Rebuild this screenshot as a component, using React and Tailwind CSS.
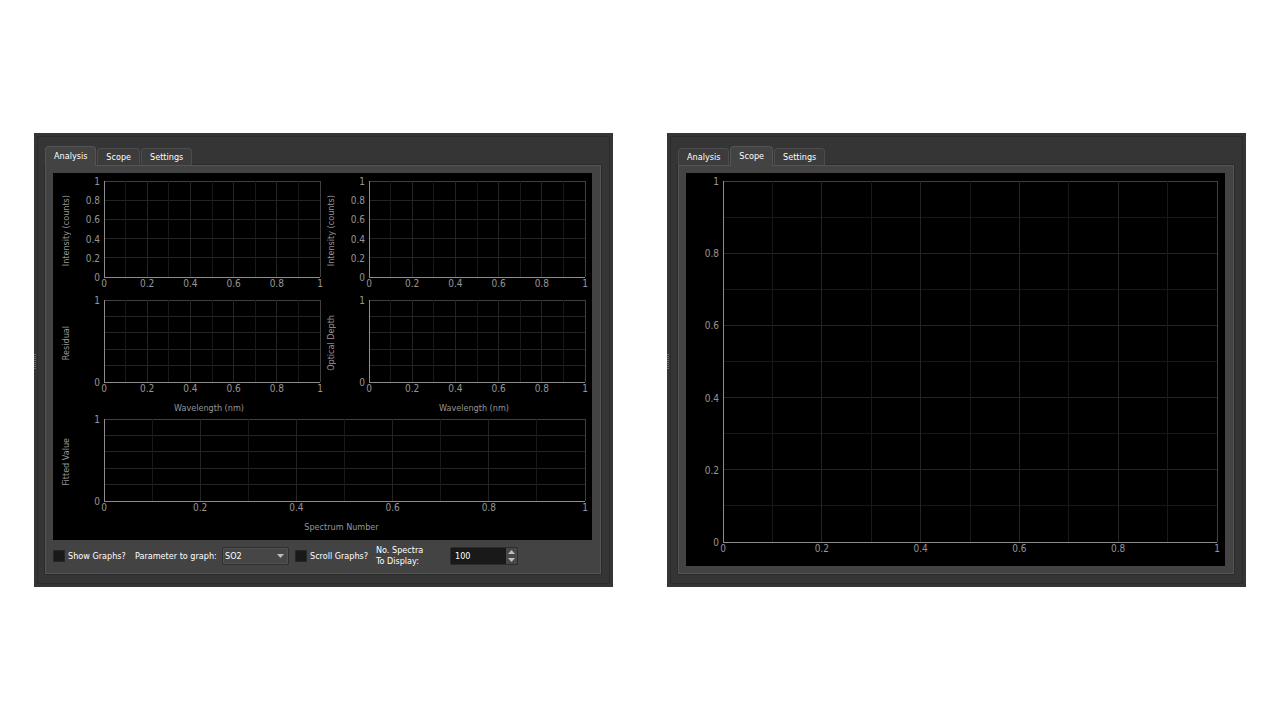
import { useId, useState } from "react";

const TABS = ["Analysis", "Scope", "Settings"];
const LABELLED = [0, 2, 4, 6, 8, 10];
const TENTHS = [0, 1, 2, 3, 4, 5, 6, 7, 8, 9, 10];

function gridColor(tenth, edge) {
  if (tenth === edge) return "#404040";
  return tenth % 2 === 0 ? "#242424" : "#181818";
}

function Plot({ rows = LABELLED, yTicks = LABELLED, className }) {
  return (
    <svg className={`block w-full overflow-visible ${className}`} role="img" aria-label="Empty plot">
      <g shapeRendering="crispEdges" strokeWidth="1">
        {rows.map((t) => (
          <line key={`h${t}`} x1="0" x2="100%" y1={`${100 - t * 10}%`} y2={`${100 - t * 10}%`} stroke={gridColor(t, 10)} />
        ))}
        {TENTHS.map((t) => (
          <line key={`v${t}`} x1={`${t * 10}%`} x2={`${t * 10}%`} y1="0" y2="100%" stroke={gridColor(t, 10)} />
        ))}
        <line x1="0" x2="0" y1="0" y2="100%" stroke="#8c8c8c" />
        <line x1="0" x2="100%" y1="100%" y2="100%" stroke="#8c8c8c" />
      </g>
      <g fill="#969696" fontSize="10">
        {yTicks.map((t) => (
          <text key={`y${t}`} x="-4" y={`${100 - t * 10}%`} dy="4" textAnchor="end">
            {t / 10}
          </text>
        ))}
        {LABELLED.map((t) => (
          <text key={`x${t}`} x={`${t * 10}%`} y="100%" dy="10" textAnchor="middle">
            {t / 10}
          </text>
        ))}
      </g>
    </svg>
  );
}

function Chart({ yLabel, xLabel, plotClass, rows, yTicks, className = "" }) {
  return (
    <div className={`flex flex-col text-[#969696] ${className}`}>
      <div className="flex">
        <div className="flex w-12 shrink-0 items-center pt-1 pl-1">
          <span className="rotate-180 leading-3 whitespace-nowrap [writing-mode:vertical-rl]">{yLabel}</span>
        </div>
        <div className="min-w-0 flex-1">
          <Plot className={plotClass} rows={rows} yTicks={yTicks} />
        </div>
      </div>
      {xLabel && <div className="mt-5 pr-0.5 pl-11 text-center leading-3">{xLabel}</div>}
    </div>
  );
}

function Window({ active, children }) {
  const [current, setCurrent] = useState(active);
  return (
    <section className="relative flex min-w-0 flex-1 flex-col bg-[#353535] pt-[13px] pr-3 pb-[13px] pl-[11px]">
      <div className="pointer-events-none absolute inset-[3px] border border-[#2c2c2c]" />
      <div className="absolute top-[221px] left-0 h-4 w-0.5 bg-[repeating-linear-gradient(#6a6a6a_0_1px,#303030_1px_2px)]" />
      <div role="tablist" className="relative z-10 flex items-end gap-px">
        {TABS.map((tab) => (
          <button
            key={tab}
            role="tab"
            aria-selected={tab === current}
            onClick={() => setCurrent(tab)}
            className={
              tab === current
                ? "-mb-px h-5 rounded-t-sm border border-b-0 border-[#545454] bg-[#434343] px-2 pb-0.5 text-white"
                : "h-[17px] rounded-t-sm border border-b-0 border-[#4c4c4c] bg-[#3c3c3c] px-2 text-white"
            }
          >
            {tab}
          </button>
        ))}
      </div>
      <div role="tabpanel" className="flex flex-1 flex-col border border-[#555555] bg-[#434343] pt-[7px] pr-2 pl-[7px] ring-1 ring-[#2b2b2b]">
        {children}
      </div>
    </section>
  );
}

function CheckBox({ label }) {
  return (
    <label className="flex items-center gap-[3px] whitespace-nowrap">
      <input
        type="checkbox"
        className="size-3 appearance-none border border-[#262626] bg-[#191919] checked:bg-[#2a82da]"
      />
      {label}
    </label>
  );
}

function SpinBox({ id }) {
  const [value, setValue] = useState(100);
  return (
    <div className="flex h-[18px] w-[68px] overflow-hidden rounded-xs border border-[#2b2b2b] bg-[#191919]">
      <input
        id={id}
        value={value}
        onChange={(e) => setValue(Number(e.target.value) || 0)}
        className="w-0 min-w-0 flex-1 bg-transparent pl-1 text-white outline-none"
      />
      <div className="flex w-[11px] flex-col bg-[#484848]">
        <button aria-label="Increase" onClick={() => setValue(value + 1)} className="flex flex-1 items-center justify-center">
          <svg width="7" height="4" viewBox="0 0 7 4" fill="#bdbdbd">
            <path d="M3.5 0 7 4H0z" />
          </svg>
        </button>
        <button aria-label="Decrease" onClick={() => setValue(value - 1)} className="flex flex-1 items-center justify-center">
          <svg width="7" height="4" viewBox="0 0 7 4" fill="#bdbdbd">
            <path d="M0 0h7L3.5 4z" />
          </svg>
        </button>
      </div>
    </div>
  );
}

function Controls() {
  const id = useId();
  return (
    <div className="flex h-[33px] items-center pb-0.5 text-white">
      <div className="w-[82px]">
        <CheckBox label="Show Graphs?" />
      </div>
      <label htmlFor={`${id}-param`} className="w-[87px] whitespace-nowrap">
        Parameter to graph:
      </label>
      <div className="relative mr-1.5 w-[67px]">
        <select
          id={`${id}-param`}
          className="block h-[18px] w-full appearance-none rounded-xs border border-[#2e2e2e] bg-[#464646] pl-0.5 text-white inset-ring inset-ring-[#525252]"
        >
          <option>SO2</option>
        </select>
        <svg className="pointer-events-none absolute top-[7px] right-[5px]" width="7" height="4" viewBox="0 0 7 4" fill="#bdbdbd">
          <path d="M0 0h7L3.5 4z" />
        </svg>
      </div>
      <div className="w-[81px]">
        <CheckBox label="Scroll Graphs?" />
      </div>
      <label htmlFor={`${id}-count`} className="w-[74px] leading-[11px]">
        No. Spectra
        <br />
        To Display:
      </label>
      <SpinBox id={`${id}-count`} />
    </div>
  );
}

export default function App() {
  return (
    <main className="flex min-h-screen items-center bg-white px-[34px] font-['DejaVu_Sans_Condensed','DejaVu_Sans',sans-serif] text-[9px] leading-3">
      <div className="flex flex-1 items-stretch gap-[54px]">
        <Window active="Analysis">
          <div className="grid grid-cols-2 gap-x-px bg-black pt-2 pr-[7px] pb-[7px] pl-[3px]">
            <Chart className="pb-[23px]" yLabel="Intensity (counts)" plotClass="h-24" />
            <Chart className="pb-[23px]" yLabel="Intensity (counts)" plotClass="h-24" />
            <Chart className="pb-[5px]" yLabel="Residual" xLabel="Wavelength (nm)" plotClass="h-[82px]" yTicks={[0, 10]} />
            <Chart className="pb-[5px]" yLabel="Optical Depth" xLabel="Wavelength (nm)" plotClass="h-[82px]" yTicks={[0, 10]} />
            <Chart className="col-span-2" yLabel="Fitted Value" xLabel="Spectrum Number" plotClass="h-[82px]" yTicks={[0, 10]} />
          </div>
          <Controls />
        </Window>
        <Window active="Scope">
          <div className="mb-[7px] flex flex-1 bg-black pt-2 pr-2 pb-6 pl-[37px]">
            <Plot className="h-auto" rows={TENTHS} />
          </div>
        </Window>
      </div>
    </main>
  );
}
